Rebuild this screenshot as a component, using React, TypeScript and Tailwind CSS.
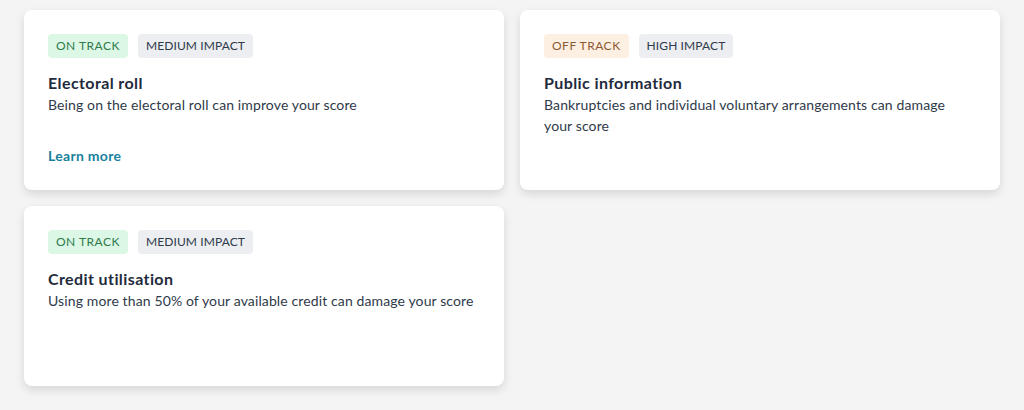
import React from "react";

type Card = {
  status: "on" | "off";
  impact: string;
  title: string;
  desc: string;
  learn?: boolean;
};

const cards: Card[] = [
  { status: "on", impact: "MEDIUM IMPACT", title: "Electoral roll", desc: "Being on the electoral roll can improve your score", learn: true },
  { status: "off", impact: "HIGH IMPACT", title: "Public information", desc: "Bankruptcies and individual voluntary arrangements can damage your score" },
  { status: "on", impact: "MEDIUM IMPACT", title: "Credit utilisation", desc: "Using more than 50% of your available credit can damage your score" },
];

export default function App() {
  return (
    <div className="min-h-[410px] w-[1024px] bg-[#f4f4f4] px-6 pt-[10px]" style={{ fontFamily: "Lato, 'Noto Sans', sans-serif" }}>
      <div className="grid grid-cols-2 gap-4">
        {cards.map((c, i) => (
          <div key={i} className="flex h-[180px] flex-col rounded-lg bg-white px-6 pt-6 pb-6 shadow-[0_4px_10px_rgba(0,0,0,0.12)]">
            <div className="flex gap-2.5">
              {c.status === "on" ? (
                <span className="flex h-6 items-center rounded bg-[#dcf7e6] px-2 text-[12px] tracking-[0.5px] text-[#2f7a4a]">ON TRACK</span>
              ) : (
                <span className="flex h-6 items-center rounded bg-[#fdefe2] px-2 text-[12px] tracking-[0.5px] text-[#8b5a32]">OFF TRACK</span>
              )}
              <span className="flex h-6 items-center rounded bg-[#eceef1] px-2 text-[12px] tracking-[0.1px] text-[#2f3a4a]">{c.impact}</span>
            </div>
            <div className="mt-[15px] text-[16px] leading-5 font-bold tracking-[0.4px] text-[#1f2b3d]">{c.title}</div>
            <div className="mt-[1px] text-[14px] leading-[21px] tracking-[0.12px] text-[#2f3a4a]">{c.desc}</div>
            {c.learn && (
              <div className="mt-auto text-[14px] leading-5 font-bold tracking-[0.3px] text-[#17819e]">Learn more</div>
            )}
          </div>
        ))}
      </div>
    </div>
  );
}
